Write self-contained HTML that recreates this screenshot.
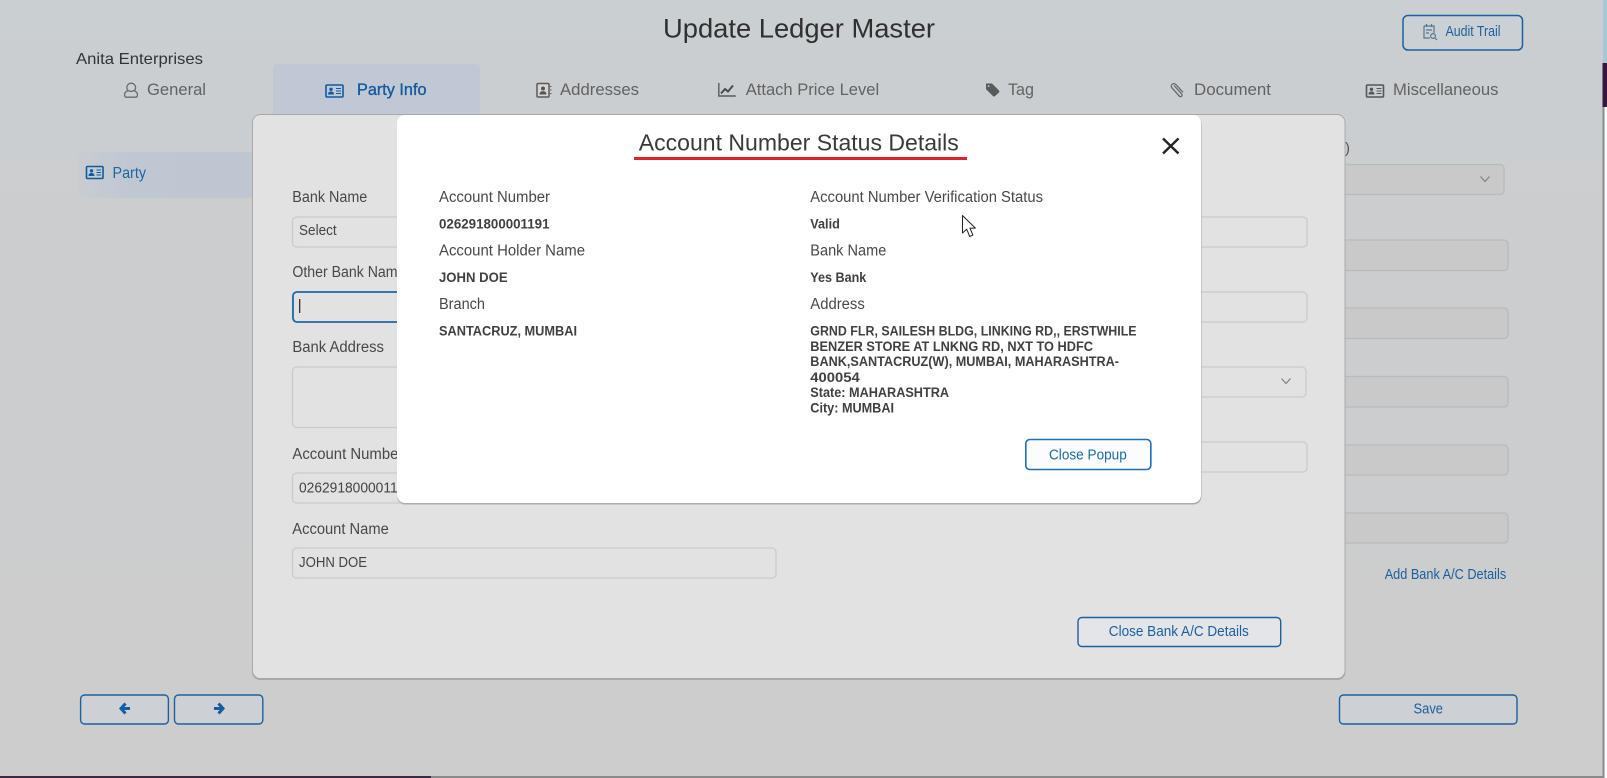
<!DOCTYPE html>
<html lang="en">
<head>
<meta charset="utf-8">
<title>Update Ledger Master</title>
<style>
html,body{margin:0;padding:0;width:1607px;height:778px;overflow:hidden;background:#f8f8fd}
svg{display:block;filter:blur(.3px)}
text{font-family:"Liberation Sans",sans-serif;fill:#484848;font-size:14px}
.tab{font-size:17px;fill:#626262}
.lab{font-size:15.5px;fill:#484848}
.b{font-size:13.5px;font-weight:bold;fill:#404040}
.val{font-size:14.5px;fill:#444}
.blue{fill:#1b64a6;font-size:14px}
.fld{fill:#e2e2e2;stroke:#cbcbcb;stroke-width:1.3}
.fldo{fill:#c9c9c9;stroke:#bababa;stroke-width:1.3}
.btn{fill:#cdd1d6;stroke:#1c619f;stroke-width:1.4}
</style>
</head>
<body>
<svg width="1607" height="778" viewBox="0 0 1607 778" xmlns="http://www.w3.org/2000/svg">
<defs>
<linearGradient id="bg" x1="0" y1="0" x2="0" y2="1">
<stop offset="0" stop-color="#cacfd2"/><stop offset="0.3" stop-color="#cccdce"/><stop offset="1" stop-color="#cdcdcd"/>
</linearGradient>
<linearGradient id="side" x1="0" y1="0" x2="1" y2="0">
<stop offset="0" stop-color="#c9cdd2"/><stop offset="0.3" stop-color="#bfc7d3"/><stop offset="1" stop-color="#bfc6d1"/>
</linearGradient>
</defs>

<!-- page -->
<rect x="0" y="0" width="1607" height="778" fill="#f8f8fd"/>
<rect x="0" y="0" width="1603" height="776" fill="url(#bg)"/>
<rect x="1603" y="0" width="4" height="63" fill="#a9c6d6"/>
<rect x="1602.5" y="63" width="4.5" height="44" fill="#35173f"/>
<rect x="1602.5" y="107" width="2" height="671" fill="#8a8a8a"/>
<rect x="0" y="776" width="431" height="2" fill="#3c2a45"/>
<rect x="431" y="776" width="1173" height="2" fill="#8a8a8a"/>

<!-- header -->
<text x="663" y="37.5" style="font-size:27px;fill:#303030" textLength="272" lengthAdjust="spacingAndGlyphs">Update Ledger Master</text>
<text x="76" y="64" style="font-size:16px;fill:#333" textLength="127" lengthAdjust="spacingAndGlyphs">Anita Enterprises</text>

<rect x="1403" y="15.5" width="119.5" height="34.5" rx="5" fill="#cbd0d5" stroke="#1c619f" stroke-width="1.5"/>
<g fill="none" stroke="#587590" stroke-width="1.2">
<path d="M1424 26h10v7M1424 26v12h6M1426.5 24v3M1431.5 24v3M1426 30h6M1426 33h3"/>
<circle cx="1433" cy="36" r="2.4"/><path d="M1435 38l2 2"/>
</g>
<text x="1445.5" y="36" style="font-size:14.5px;fill:#1c5f9c" textLength="55" lengthAdjust="spacingAndGlyphs">Audit Trail</text>

<!-- tabs -->
<path d="M273 115V68a4 4 0 0 1 4-4h199a4 4 0 0 1 4 4v47z" fill="#bfc8d4"/>

<path d="M128 90.6a4.4 4.4 0 1 1 6.4 0" fill="none" stroke="#6a6a6a" stroke-width="1.3"/>
<path d="M128 90.6c-2 .8-3.4 2-3.4 3.6v1.3c0 1 .8 1.7 1.7 1.7h9.4c.9 0 1.7-.7 1.7-1.7v-1.3c0-1.6-1.4-2.8-3.4-3.6-2 1-4 1-6 0z" fill="none" stroke="#6a6a6a" stroke-width="1.3"/>
<text x="147" y="95" class="tab" textLength="59" lengthAdjust="spacingAndGlyphs">General</text>

<!-- party info icon -->
<rect x="326" y="85" width="17" height="12" rx="1" fill="none" stroke="#115b9e" stroke-width="1.6"/>
<circle cx="331" cy="89.3" r="1.7" fill="#115b9e"/><path d="M328 94.5c0-2.2 1.3-3 3-3s3 .8 3 3z" fill="#115b9e"/>
<path d="M336 88.5h5M336 91h5M336 93.5h5" stroke="#115b9e" stroke-width="1.1"/>
<text x="357" y="95" style="font-size:17px;fill:#125a9c;stroke:#125a9c;stroke-width:.35" textLength="69.5" lengthAdjust="spacingAndGlyphs">Party Info</text>

<!-- addresses icon -->
<rect x="537" y="83.5" width="12" height="13.5" rx="1" fill="#d6d6d6" stroke="#5a5a5a" stroke-width="1.5"/>
<circle cx="543" cy="88.5" r="2" fill="#555"/><path d="M539.5 94.5c0-2.5 1.5-3.3 3.5-3.3s3.5.8 3.5 3.3z" fill="#555"/>
<path d="M550 86.5h1.5M550 90h1.5M550 93.5h1.5" stroke="#5a5a5a" stroke-width="1"/>
<text x="560" y="95" class="tab" textLength="79" lengthAdjust="spacingAndGlyphs">Addresses</text>

<!-- chart icon -->
<path d="M718.8 83v13h17" fill="none" stroke="#5a5a5a" stroke-width="1.4"/>
<path d="M721 93.5l4-4.5 3 2.5 5-6" fill="none" stroke="#4a4a4a" stroke-width="1.9"/>
<text x="745.7" y="95" class="tab" textLength="133.5" lengthAdjust="spacingAndGlyphs">Attach Price Level</text>

<!-- tag icon -->
<path d="M986 83.5h6l7 7a1.5 1.5 0 0 1 0 2l-4 3.6a1.5 1.5 0 0 1-2 0l-7-7z" fill="#5a5a5a"/>
<circle cx="988.6" cy="86.1" r=".9" fill="#cdcdcd"/>
<text x="1008" y="95" class="tab" textLength="26" lengthAdjust="spacingAndGlyphs">Tag</text>

<!-- paperclip icon -->
<path d="M1174 85.5l7.5 8.3c1.8 2 -.8 3.8-2.3 2.2l-7-7.8c-2.8-3 1.3-6.2 3.8-3.5l7 7.6" fill="none" stroke="#6a6a6a" stroke-width="1.3"/>
<text x="1194" y="95" class="tab" textLength="77" lengthAdjust="spacingAndGlyphs">Document</text>

<!-- misc icon -->
<rect x="1366.5" y="85" width="17" height="12" rx="1" fill="none" stroke="#555" stroke-width="1.6"/>
<circle cx="1371.5" cy="89.3" r="1.7" fill="#555"/><path d="M1368.5 94.5c0-2.2 1.3-3 3-3s3 .8 3 3z" fill="#555"/>
<path d="M1376.5 88.5h5M1376.5 91h5M1376.5 93.5h5" stroke="#555" stroke-width="1.1"/>
<text x="1393" y="95" class="tab" textLength="105.5" lengthAdjust="spacingAndGlyphs">Miscellaneous</text>

<!-- sidebar -->
<rect x="78" y="152" width="176" height="46" rx="3" fill="url(#side)"/>
<rect x="86.5" y="166.5" width="16.5" height="12" rx="1" fill="none" stroke="#115b9e" stroke-width="1.6"/>
<circle cx="91.5" cy="170.8" r="1.7" fill="#115b9e"/><path d="M88.5 176c0-2.2 1.3-3 3-3s3 .8 3 3z" fill="#115b9e"/>
<path d="M96.5 170h4.5M96.5 172.5h4.5M96.5 175h4.5" stroke="#115b9e" stroke-width="1.1"/>
<text x="112.5" y="178" style="font-size:16px;fill:#1f659f" textLength="33.5" lengthAdjust="spacingAndGlyphs">Party</text>

<!-- right column behind panel -->
<text x="1345" y="153" style="font-size:15px;fill:#555">)</text>
<rect x="1320" y="164.5" width="184" height="30" rx="4" class="fldo"/>
<path d="M1480.5 176.5l4.5 5 4.5-5" fill="none" stroke="#808080" stroke-width="1.2"/>
<rect x="1320" y="240" width="188" height="30.5" rx="4" class="fldo"/>
<rect x="1320" y="308" width="188" height="30.5" rx="4" class="fldo"/>
<rect x="1320" y="376.5" width="188" height="30.5" rx="4" class="fldo"/>
<rect x="1320" y="445" width="188" height="30" rx="4" class="fldo"/>
<rect x="1320" y="513" width="188" height="30" rx="4" class="fldo"/>
<text x="1384.7" y="579" style="font-size:14.5px;fill:#1c5f9c" textLength="121.5" lengthAdjust="spacingAndGlyphs">Add Bank A/C Details</text>

<!-- footer buttons -->
<rect x="80.6" y="695" width="87.8" height="29" rx="4" class="btn"/>
<rect x="174.5" y="695" width="88.3" height="29" rx="4" class="btn"/>
<path d="M125.5 703.5l-4.5 5 4.5 5M122 708.5h8" fill="none" stroke="#115da6" stroke-width="3"/>
<path d="M218.5 703.5l4.5 5-4.5 5M222 708.5h-8" fill="none" stroke="#115da6" stroke-width="3"/>
<rect x="1339.5" y="695" width="177.5" height="29" rx="4" class="btn"/>
<text x="1413.5" y="713.5" style="font-size:14.5px;fill:#1c5f9c" textLength="29.5" lengthAdjust="spacingAndGlyphs">Save</text>

<!-- bank panel -->
<rect x="252" y="116" width="1093.5" height="564" rx="8" fill="#a8a8a8"/>
<rect x="252.5" y="114.5" width="1092.5" height="564" rx="8" fill="#e2e2e2" stroke="#a8a8a8" stroke-width=".9"/>

<text x="292.3" y="202" class="lab" textLength="75" lengthAdjust="spacingAndGlyphs">Bank Name</text>
<rect x="292.5" y="217" width="1014" height="30" rx="4" class="fld"/>
<text x="299" y="235" class="val" textLength="37.7" lengthAdjust="spacingAndGlyphs">Select</text>

<text x="292.4" y="277" class="lab" textLength="113" lengthAdjust="spacingAndGlyphs">Other Bank Name</text>
<rect x="292.5" y="292" width="1014" height="30" rx="4" class="fld"/>
<rect x="293" y="292" width="200" height="30" rx="4" fill="#e2e2e2" stroke="#1d6aa8" stroke-width="1.8"/>
<rect x="299" y="299" width="1.3" height="14" fill="#333"/>

<text x="292.4" y="352" class="lab" textLength="91.6" lengthAdjust="spacingAndGlyphs">Bank Address</text>
<rect x="292.5" y="367" width="200" height="60.5" rx="4" class="fld"/>
<rect x="1000" y="367" width="306" height="30" rx="4" class="fld"/>
<path d="M1281.5 378.5l4.5 5 4.5-5" fill="none" stroke="#808080" stroke-width="1.2"/>

<text x="292.4" y="459" class="lab" textLength="111" lengthAdjust="spacingAndGlyphs">Account Number</text>
<rect x="292.5" y="473" width="200" height="30" rx="4" class="fld"/>
<text x="299" y="492.5" class="val" textLength="114" lengthAdjust="spacingAndGlyphs">026291800001191</text>
<rect x="1000" y="442" width="307" height="30" rx="4" class="fld"/>

<text x="292.3" y="534" class="lab" textLength="96.5" lengthAdjust="spacingAndGlyphs">Account Name</text>
<rect x="292.5" y="548" width="483.5" height="30" rx="4" class="fld"/>
<text x="299" y="567" class="val" textLength="68" lengthAdjust="spacingAndGlyphs">JOHN DOE</text>

<rect x="1000" y="217" width="307" height="30" rx="4" class="fld"/>
<rect x="1000" y="292" width="307" height="30" rx="4" class="fld"/>

<rect x="1078" y="617.5" width="202.7" height="29" rx="4" fill="#e4e5e8" stroke="#1c619f" stroke-width="1.4"/>
<text x="1108.8" y="636" style="font-size:14.5px;fill:#1c5f9c" textLength="140" lengthAdjust="spacingAndGlyphs">Close Bank A/C Details</text>

<!-- modal -->
<rect x="397" y="116" width="804.5" height="388.5" rx="8" fill="#acacac"/>
<rect x="397" y="115" width="804" height="388" rx="8" fill="#fff"/>

<text x="638.8" y="150.5" style="font-size:23.5px;fill:#3a3a3a" textLength="320" lengthAdjust="spacingAndGlyphs">Account Number Status Details</text>
<rect x="634" y="157" width="333" height="3" fill="#e2202d"/>
<path d="M1163 138.5l15.5 15M1178.5 138.5l-15.5 15" fill="none" stroke="#222" stroke-width="2.4"/>

<text x="439" y="202" class="lab" textLength="111" lengthAdjust="spacingAndGlyphs">Account Number</text>
<text x="439" y="228.5" class="b" textLength="110.5" lengthAdjust="spacingAndGlyphs">026291800001191</text>
<text x="439" y="255.5" class="lab" textLength="146" lengthAdjust="spacingAndGlyphs">Account Holder Name</text>
<text x="439" y="282" class="b" textLength="68.6" lengthAdjust="spacingAndGlyphs">JOHN DOE</text>
<text x="439" y="309" class="lab" textLength="46" lengthAdjust="spacingAndGlyphs">Branch</text>
<text x="439" y="335.5" class="b" textLength="138" lengthAdjust="spacingAndGlyphs">SANTACRUZ, MUMBAI</text>

<text x="810.3" y="202" class="lab" textLength="232.7" lengthAdjust="spacingAndGlyphs">Account Number Verification Status</text>
<text x="810.3" y="228.5" class="b" textLength="29.5" lengthAdjust="spacingAndGlyphs">Valid</text>
<text x="810.3" y="255.5" class="lab" textLength="76" lengthAdjust="spacingAndGlyphs">Bank Name</text>
<text x="810.3" y="282" class="b" textLength="56" lengthAdjust="spacingAndGlyphs">Yes Bank</text>
<text x="810.3" y="309" class="lab" textLength="54.5" lengthAdjust="spacingAndGlyphs">Address</text>

<text x="810.3" y="335.5" class="b" textLength="326.3" lengthAdjust="spacingAndGlyphs">GRND FLR, SAILESH BLDG, LINKING RD,, ERSTWHILE</text>
<text x="810.3" y="351" class="b" textLength="282.7" lengthAdjust="spacingAndGlyphs">BENZER STORE AT LNKNG RD, NXT TO HDFC</text>
<text x="810.3" y="366" class="b" textLength="308.7" lengthAdjust="spacingAndGlyphs">BANK,SANTACRUZ(W), MUMBAI, MAHARASHTRA-</text>
<text x="810.3" y="382" class="b" style="font-size:14px" textLength="49.4" lengthAdjust="spacingAndGlyphs">400054</text>
<text x="810.3" y="397" class="b" textLength="138.7" lengthAdjust="spacingAndGlyphs">State: MAHARASHTRA</text>
<text x="810.3" y="412.5" class="b" textLength="83.7" lengthAdjust="spacingAndGlyphs">City: MUMBAI</text>

<rect x="1025.8" y="439.5" width="125" height="30" rx="4" fill="#fbfcfd" stroke="#1a6fb5" stroke-width="1.6"/>
<text x="1049" y="459.3" style="font-size:14.5px;fill:#1c69a8" textLength="77.8" lengthAdjust="spacingAndGlyphs">Close Popup</text>

<!-- mouse cursor -->
<path d="M962.5 215.5v17.5l4.2-3.8 3 7.3 3.2-1.4-3-7h5.5z" fill="#fff" stroke="#222" stroke-width="1" stroke-linejoin="round"/>
</svg>
</body>
</html>
